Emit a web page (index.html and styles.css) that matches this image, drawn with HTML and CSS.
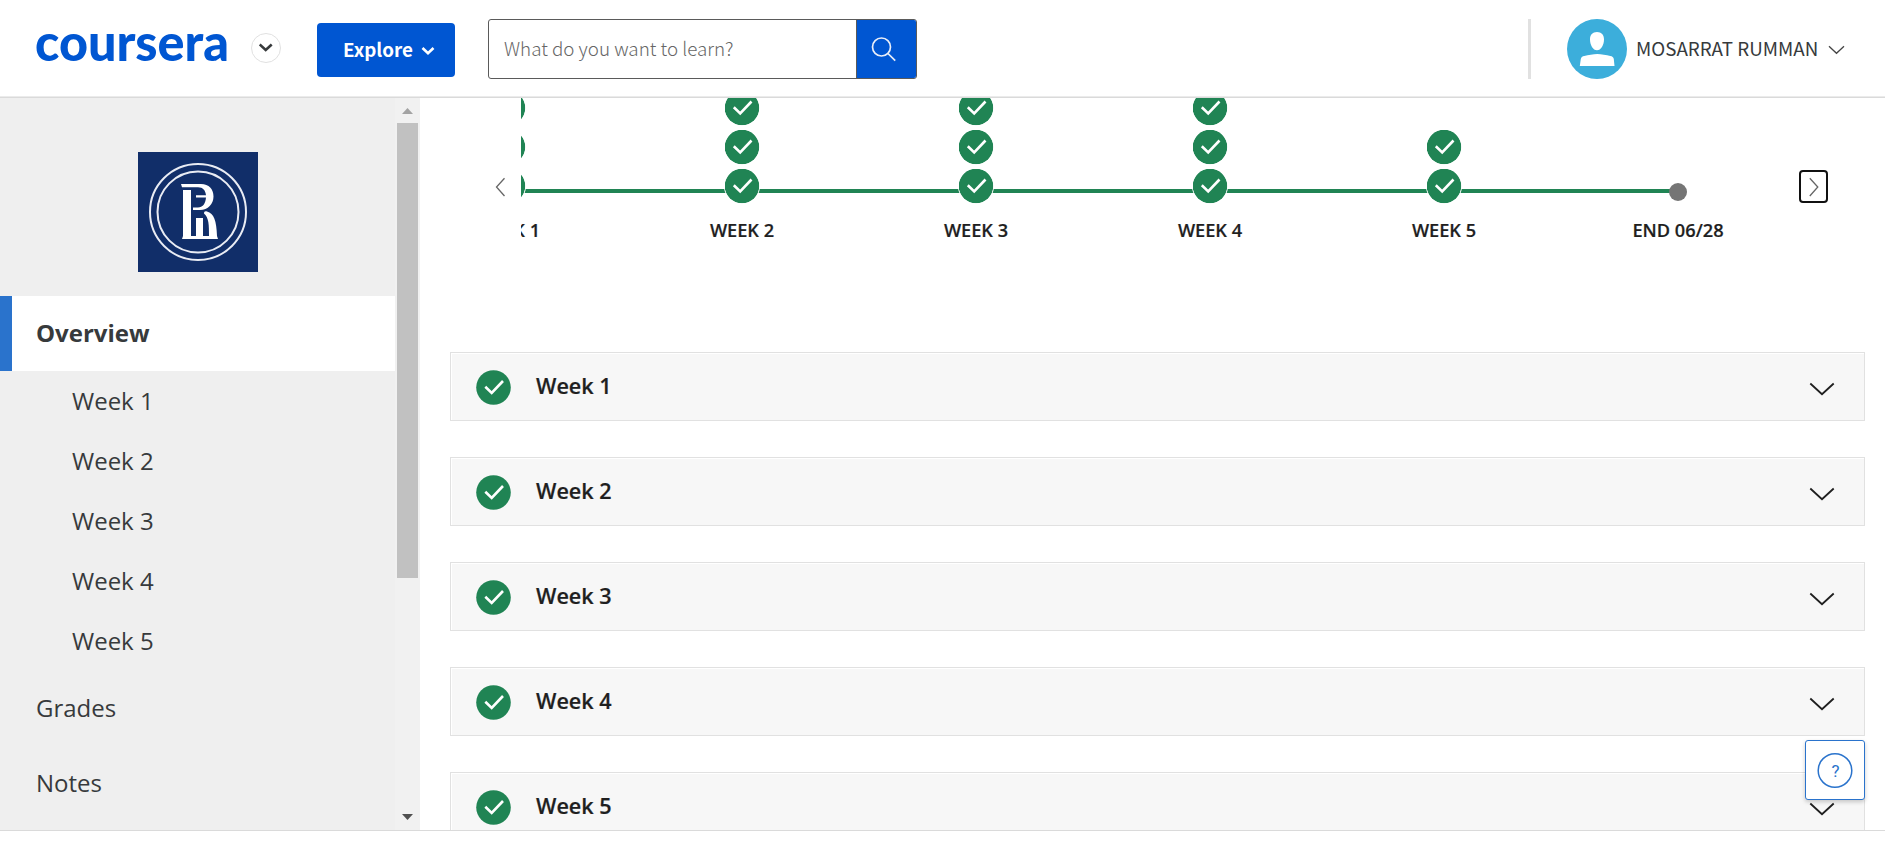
FILE: index.html
```html
<!DOCTYPE html>
<html lang="en">
<head>
<meta charset="utf-8">
<title>Coursera</title>
<link rel="stylesheet" href="styles.css">
</head>
<body>
<svg width="0" height="0" class="defs">
  <symbol id="check" viewBox="0 0 35 35"><circle cx="17.500" cy="17.500" r="17.300" fill="#208454"/><path d="M9.300 16.700l6.400 6.200L27 11" fill="none" stroke="#fff" stroke-width="2.600"/></symbol>
  <symbol id="down" viewBox="0 0 26 14"><path d="M1.300 1.500L13 12.200 24.700 1.500" fill="none" stroke="#1f1f1f" stroke-width="1.800"/></symbol>
</svg>
<header class="header">
  <svg class="wordmark" width="196" height="60" viewBox="0 0 196 60"><text x="-1" y="46" textLength="194" lengthAdjust="spacingAndGlyphs">coursera</text></svg>
  <button class="round"><svg width="14" height="10" viewBox="0 0 14 10"><path d="M.7 1.500l6 5.500 6-5.500" fill="none" stroke="#373a3c" stroke-width="2.600"/></svg></button>
  <button class="explore"><span>Explore</span><svg width="14" height="10" viewBox="0 0 14 10"><path d="M1.500 2L7 7.300 12.500 2" fill="none" stroke="#fff" stroke-width="2.600"/></svg></button>
  <div class="search"><span class="field">What do you want to learn?</span><span class="go"><svg width="28" height="28" viewBox="0 0 28 28" fill="none" stroke="#e9eef8" stroke-width="1.700"><circle cx="11.500" cy="11" r="9"/><path d="M18 17.500l7.200 7.200"/></svg></span></div>
  <div class="account"><svg class="avatar" width="60" height="60" viewBox="0 0 60 60"><circle cx="30" cy="30" r="30" fill="#3caedb"/><path d="M30 13c4.500 0 7 3 7 7.200 0 6-3 11-7 11s-7-5-7-11c0-4.200 2.500-7.200 7-7.200zM12.800 47l1-7c.4-2 1.500-2.600 3.500-3 4-.8 9-2 13-2s9 1.200 13 2c2 .4 3.100 1 3.500 3l.7 7z" fill="#fff"/></svg><span class="name">MOSARRAT RUMMAN</span><svg class="caret" width="17" height="10" viewBox="0 0 17 10"><path d="M1 1.300l7.500 7 7.500-7" fill="none" stroke="#444" stroke-width="1.300"/></svg></div>
</header>
<div class="body">
  <aside class="sidebar">
    <nav class="nav">
      <svg class="crest" width="120" height="120" viewBox="0 0 120 120"><rect width="120" height="120" fill="#112e69"/><g fill="none" stroke="#e9ecf4" stroke-width="2"><circle cx="60" cy="60" r="48"/><circle cx="60" cy="60" r="40.500"/></g><path d="M43 32h20c8 0 12.500 5 12.500 12.500S70 58 62 58h-7v-2.500h5c4.500 0 7.500-3.500 8-10H58v-2.300h10c-.5-5-3-8-8-8H44zM45 38h8v46h5V66h7v18h6c0-11 0-18-5-22.500 0-2 1-2.500 3-2 7 2 9.500 9 10 24.500l1 3H44l1-3z" fill="#fff"/></svg>
      <a class="item active">Overview</a>
      <a class="sub">Week 1</a><a class="sub">Week 2</a><a class="sub">Week 3</a><a class="sub">Week 4</a><a class="sub">Week 5</a>
      <a class="item">Grades</a><a class="item">Notes</a>
    </nav>
    <div class="scrollbar"><svg width="11" height="6"><path d="M0 6L5.500 0 11 6z" fill="#a3a3a3"/></svg><div class="thumb"></div><svg class="arrow-down" width="11" height="6"><path d="M0 0h11L5.500 6z" fill="#505050"/></svg></div>
  </aside>
  <main class="main">
    <section class="timeline">
      <svg class="prev" width="12" height="20" viewBox="0 0 12 20"><path d="M9.500 1.200L1.500 10l8 9" fill="none" stroke="#666" stroke-width="1.300"/></svg>
      <div class="track">
        <div class="stops">
          <div class="stop"><div class="marks"><svg><use href="#check"/></svg><svg><use href="#check"/></svg><svg><use href="#check"/></svg></div><b>WEEK 1</b></div>
          <div class="stop"><div class="marks"><svg><use href="#check"/></svg><svg><use href="#check"/></svg><svg><use href="#check"/></svg></div><b>WEEK 2</b></div>
          <div class="stop"><div class="marks"><svg><use href="#check"/></svg><svg><use href="#check"/></svg><svg><use href="#check"/></svg></div><b>WEEK 3</b></div>
          <div class="stop"><div class="marks"><svg><use href="#check"/></svg><svg><use href="#check"/></svg><svg><use href="#check"/></svg></div><b>WEEK 4</b></div>
          <div class="stop"><div class="marks"><svg><use href="#check"/></svg><svg><use href="#check"/></svg></div><b>WEEK 5</b></div>
          <div class="stop end"><div class="marks"><i class="dot"></i></div><b>END 06/28</b></div>
        </div>
      </div>
      <button class="next"><svg width="12" height="20" viewBox="0 0 12 20"><path d="M1.800 1.200l8 8.800-8 9" fill="none" stroke="#666" stroke-width="1.300"/></svg></button>
    </section>
    <section class="weeks">
      <div class="card"><svg class="tick"><use href="#check"/></svg><h2>Week 1</h2><svg class="chev"><use href="#down"/></svg></div>
      <div class="card"><svg class="tick"><use href="#check"/></svg><h2>Week 2</h2><svg class="chev"><use href="#down"/></svg></div>
      <div class="card"><svg class="tick"><use href="#check"/></svg><h2>Week 3</h2><svg class="chev"><use href="#down"/></svg></div>
      <div class="card"><svg class="tick"><use href="#check"/></svg><h2>Week 4</h2><svg class="chev"><use href="#down"/></svg></div>
      <div class="card"><svg class="tick"><use href="#check"/></svg><h2>Week 5</h2><svg class="chev"><use href="#down"/></svg></div>
    </section>
  </main>
</div>
<button class="help"><svg width="58" height="58" viewBox="0 0 58 58"><circle cx="29" cy="29.500" r="16.800" fill="none" stroke="#2a73cc" stroke-width="1.500"/><text x="29.500" y="35.500" text-anchor="middle">?</text></svg></button>
</body>
</html>
```
FILE: styles.css
```css
* { box-sizing: border-box; }
body { margin: 0; height: 846px; overflow: hidden; background: #fff; font-family: "Open Sans", sans-serif; color: #1f1f1f; }
button { padding: 0; font: inherit; }
svg { display: block; flex: none; }
.defs { position: absolute; }

.header { height: 98px; display: flex; align-items: flex-start; border-bottom: 1px solid #dadada; box-shadow: inset 0 -1px #ebebeb; font-family: "Noto Sans CJK JP", sans-serif; white-space: nowrap; }
.wordmark { margin: 15px 0 0 36px; overflow: visible; }
.wordmark text { font: 900 52px/1 Lato, sans-serif; fill: #0056d2; }
.round { width: 30px; height: 30px; margin: 33px 0 0 19px; border: 1px solid #e1e1e1; border-radius: 50%; background: #fff; display: grid; place-items: center; }
.explore { width: 138px; height: 54px; margin: 23px 0 0 36px; padding: 0 0 3px 26px; border: 0; border-radius: 4px; background: #0056d2; color: #fff; display: flex; align-items: center; font-size: 18.800px; font-weight: 700; }
.explore span { width: 78px; text-align: left; }
.explore svg { margin-top: 4px; }
.search { width: 429px; height: 60px; margin: 19px 0 0 33px; border: 1px solid #5a5a5a; border-radius: 3px; display: flex; overflow: hidden; }
.field { flex: 1; padding-left: 15px; line-height: 56px; font-size: 18.800px; font-weight: 300; color: #666; }
.go { width: 60px; border-left: 1px solid #5a5a5a; background: #0056d2; padding: 16px 0 0 13px; }
.account { margin: 19px 0 0 611px; width: 330px; height: 60px; padding-left: 36px; border-left: 3px solid #e1e1e1; display: flex; align-items: center; }
.name { width: 192px; margin: -3px 0 0 9px; font-size: 18.800px; font-weight: 400; color: #373a3c; }
.caret { margin-top: 2px; }

.body { height: 733px; display: flex; overflow: hidden; border-bottom: 1px solid #dadada; }
.sidebar { width: 420px; flex: none; display: flex; background: #efefef; }
.nav { width: 395px; display: flex; flex-direction: column; font-size: 24px; color: #373a3c; }
.crest { margin: 54px 0 24px 138px; }
.item { height: 75px; flex: none; padding-left: 36px; line-height: 73px; }
.active { padding-left: 24px; border-left: 12px solid #2a73cc; background: #fff; font-weight: 700; }
.sub { height: 60px; flex: none; padding-left: 72px; line-height: 60px; }
.scrollbar { width: 25px; padding: 10px 2px 10px; background: #f1f1f1; display: flex; flex-direction: column; align-items: center; }
.thumb { width: 21px; height: 455px; margin-top: 9px; background: #c1c1c1; }
.arrow-down { margin-top: auto; }

.main { flex: 1; padding: 0 20px 0 30px; }
.timeline { height: 254px; display: flex; }
.prev { margin: 79px 0 0 45px; }
.track { width: 1257px; height: 170px; margin-left: 14px; overflow: hidden; flex: none; }
.stops { width: 1404px; margin-left: -130px; display: flex; }
.stop { width: 234px; flex: none; text-align: center; background: linear-gradient(#208454, #208454) 0 91px / 100% 4px no-repeat; }
.stop.end { background-size: 110px 4px; }
.stop b { display: block; font-size: 18.200px; line-height: 24px; font-weight: 600; margin-top: 14px; -webkit-text-stroke: .2px; }
.marks { height: 106px; display: flex; flex-direction: column; justify-content: flex-end; align-items: center; gap: 3px; }
.marks svg { width: 36px; height: 36px; padding: .5px; border-radius: 50%; background: #fff; overflow: hidden; }
.dot { width: 18px; height: 18px; margin-bottom: 3px; border-radius: 50%; background: #757575; }
.next { width: 29px; height: 33px; margin: 72px 0 0 21px; border: 2px solid #111; border-radius: 4px; background: #fff; display: grid; place-items: center; }

.weeks { display: flex; flex-direction: column; gap: 36px; }
.card { height: 69px; flex: none; border: 1px solid #e1e1e1; box-shadow: inset 1px 1px #fff; background: #f7f7f7; display: flex; align-items: center; padding: 0 29px 0 25px; }
.tick { width: 35px; height: 35px; margin-top: 1px; }
.card h2 { flex: 1; margin: 0 0 2px 25px; font-size: 21.600px; font-weight: 600; line-height: 30px; -webkit-text-stroke: .2px; }
.chev { width: 26px; height: 14px; margin-top: 5px; }

.help { position: absolute; left: 1805px; top: 740px; width: 60px; height: 60px; border: 1px solid #2a73cc; border-radius: 3px; background: #fff; box-shadow: 0 2px 4px rgba(0,0,0,.2); }
.help text { fill: #2a73cc; font: 17px Roboto, sans-serif; }
```
